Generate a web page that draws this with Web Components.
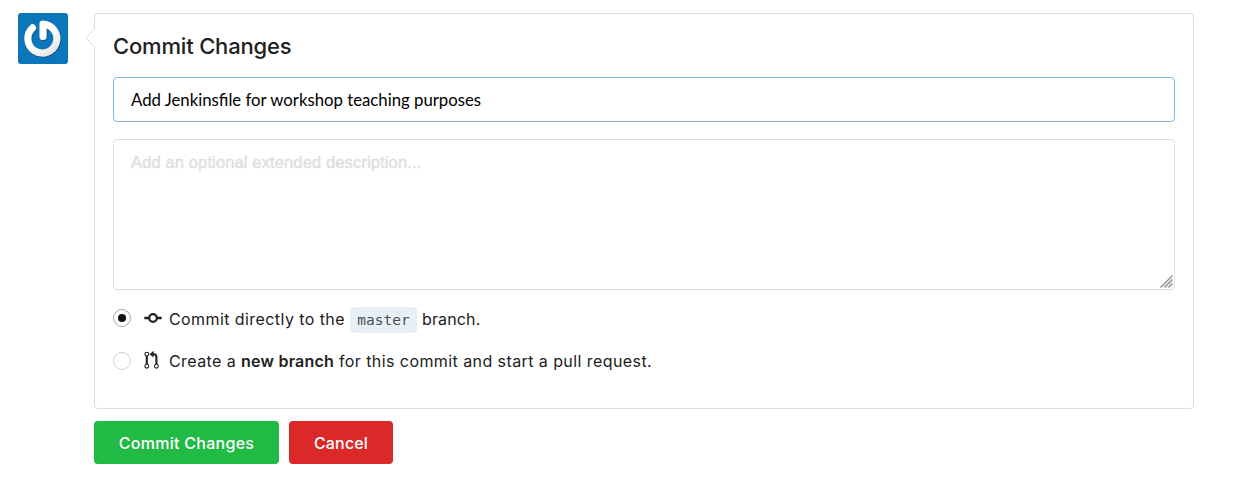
<!DOCTYPE html>
<html lang="en">
<head>
<meta charset="utf-8">
<title>Commit Changes</title>
<style>
body{margin:0;background:#fff;color:#212121;font:16px/20px Inter,"Liberation Sans",sans-serif}
</style>
</head>
<body>
<commit-page></commit-page>
<script>
const define=(name,html)=>customElements.define(name,class extends HTMLElement{
  constructor(){super();this.attachShadow({mode:"open"}).innerHTML=html;}
});
define("user-avatar",`<style>:host{display:block;width:50px;height:51px}svg{display:block}</style>
<svg width="50" height="51" viewBox="0 0 50 51"><defs><filter id="s" x="-20%" y="-20%" width="140%" height="140%"><feDropShadow dx="0.6" dy="0.9" stdDeviation="0.6" flood-color="#033e68" flood-opacity=".7"/></filter><linearGradient id="g" gradientUnits="userSpaceOnUse" x1="10" y1="8" x2="38" y2="44"><stop offset=".5" stop-color="#fff"/><stop offset="1" stop-color="#dedede"/></linearGradient></defs>
<rect width="50" height="51" rx="3" fill="#0b76b9"/>
<g fill="none" stroke="url(#g)" stroke-width="7" stroke-linecap="round" stroke-linejoin="round" filter="url(#s)"><path d="M14.5 14.8A14.5 14.5 0 1 0 25 11V23.5"/></g></svg>`);
define("comment-card",`<style>:host{display:block;position:relative;box-sizing:border-box;width:1100px;height:396px;padding:17px 18px 0;border:1px solid #dcdddd;border-radius:4px;background:#fff}
.tip{position:absolute;left:-10px;top:15px;width:10px;height:18px}</style>
<svg class="tip" viewBox="0 0 10 18"><path d="M10 0L.8 9L10 18" fill="#fff"/><path d="M9.5 0L.8 9L9.5 18" fill="none" stroke="#d8d9d9"/></svg><slot></slot>`);
define("card-title",`<style>:host{display:block;height:28px;margin-bottom:18px;font-size:22px;line-height:31px;font-weight:500;letter-spacing:-.18px;white-space:nowrap}</style><slot></slot>`);
define("text-field",`<style>:host{display:block;box-sizing:border-box;height:45px;margin-bottom:17px;padding:12px 17px;border:1px solid #85b7d9;border-radius:4px;color:#000;font:16.75px/20px Lato,sans-serif}</style><slot></slot>`);
define("text-area",`<style>:host{display:block;position:relative;box-sizing:border-box;height:151px;padding:12px 17px;border:1px solid #dcdddd;border-radius:4px;color:#dfdfdf;font:16.5px/20px "Liberation Sans",sans-serif;letter-spacing:.13px;-webkit-text-stroke:.5px #dfdfdf}
svg{position:absolute;right:1px;bottom:1px}</style><slot></slot>
<svg width="13" height="13" viewBox="0 0 13 13"><path d="M.5 12.5L12.5.5M4.5 12.5L12.5 4.5M8.5 12.5L12.5 8.5" fill="none" stroke="#888" stroke-width="1.2"/><path d="M2.5 12.5L12.5 2.5M6.5 12.5L12.5 6.5" fill="none" stroke="#ccc" stroke-width=".6"/></svg>`);
define("radio-option",`<style>:host{display:flex;align-items:center;height:26px;white-space:pre}
i{box-sizing:border-box;width:18px;height:18px;border:1px solid #d4d4d5;border-radius:50%;margin:-2px 13px 0 0;display:grid;place-items:center}
:host([checked]) i{margin-top:-4px;border-color:#aaa}:host([checked]) i::after{content:"";width:8px;height:8px;border-radius:50%;background:#111}
.t{display:flex;align-items:center;margin-left:7px}</style><i></i><slot name="icon"></slot><span class="t"><slot></slot></span>`);
define("commit-icon",`<style>:host{display:block;width:18px;height:18px;margin-top:-4px}svg{display:block}</style><svg width="18" height="18" viewBox="0 0 18 18"><path d="M.3 9H5.4M12.6 9H17.7" stroke="#212121" stroke-width="2.5"/><circle cx="9" cy="9" r="3.8" fill="none" stroke="#212121" stroke-width="2.2"/></svg>`);
define("pull-icon",`<style>:host{display:block;width:18px;height:18px;margin-top:-4px}svg{display:block}</style><svg width="18" height="18" viewBox="0 0 18 18" fill="none" stroke="#212121"><path d="M2.8 5V13M12.4 13V6Q12.4 3.2 10 3.2H8.8" stroke-width="2.1"/><circle cx="2.8" cy="3.1" r="1.9" fill="#fff" stroke-width="1.1"/><circle cx="2.8" cy="15.2" r="1.9" fill="#fff" stroke-width="1.1"/><circle cx="12.4" cy="15.2" r="1.9" fill="#fff" stroke-width="1.1"/><path d="M9.6 -.2V6.6L5.5 3.2Z" fill="#212121" stroke="none"/></svg>`);
define("copy-text",`<style>:host{display:block;margin-top:-2px;letter-spacing:.42px}:host(.end){letter-spacing:.15px}::slotted(b){font-weight:600;letter-spacing:.22px}</style><slot></slot>`);
define("branch-tag",`<style>:host{display:block;box-sizing:border-box;width:67px;height:26px;margin:0 5px;border-radius:4px;background:#e8f0f7;color:#4d4d4d;text-align:center;font:14.5px/26px "DejaVu Sans Mono",monospace}</style><slot></slot>`);
define("action-button",`<style>:host{display:flex;align-items:center;justify-content:center;width:185px;height:43px;border-radius:4px;background:#21ba45;color:#fff;font-weight:500;letter-spacing:.28px;white-space:nowrap}:host([kind=cancel]){width:104px;background:#db2828;letter-spacing:.15px}</style><span><slot></slot></span>`);
define("commit-page",`<style>:host{display:grid;grid-template-columns:50px 1100px;column-gap:26px;padding:13px 0 0 18px}
.options{display:grid;gap:16px;padding-top:17px}.actions{display:flex;gap:10px;margin-top:12px}</style>
<user-avatar></user-avatar><main><comment-card><card-title>Commit Changes</card-title><text-field>Add Jenkinsfile for workshop teaching purposes</text-field><text-area>Add an optional extended description...</text-area>
<div class="options"><radio-option checked><commit-icon slot="icon"></commit-icon><copy-text>Commit directly to the</copy-text><branch-tag>master</branch-tag><copy-text class="end">branch.</copy-text></radio-option><radio-option><pull-icon slot="icon"></pull-icon><copy-text>Create a <b>new branch</b> for this commit and start a pull request.</copy-text></radio-option></div></comment-card>
<div class="actions"><action-button>Commit Changes</action-button><action-button kind="cancel">Cancel</action-button></div></main>`);
</script>
</body>
</html>
